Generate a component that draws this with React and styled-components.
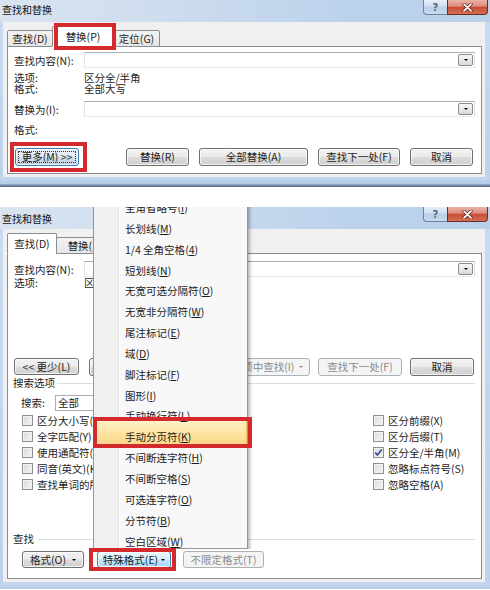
import React from 'react';
import styled, { createGlobalStyle, css } from 'styled-components';

const GlobalStyle = createGlobalStyle`
  html, body { margin: 0; padding: 0; background: #fff; }
  body {
    font-family: "Noto Sans CJK SC", "Noto Sans", sans-serif;
    font-size: 10.5px;
    color: #1c1c1c;
  }
  * { box-sizing: border-box; }
`;

const RED = '#d42a2e';

const redMark = css`
  position: relative;
  &::after {
    content: '';
    position: absolute;
    top: ${p => p.$mark.t}px;
    right: ${p => p.$mark.r}px;
    bottom: ${p => p.$mark.b}px;
    left: ${p => p.$mark.l}px;
    border: ${p => p.$mark.w || 4}px solid ${RED};
    pointer-events: none;
    z-index: 5;
  }
`;

const Page = styled.div`
  width: 490px;
  height: 590px;
  overflow: hidden;
  display: flex;
  flex-direction: column;
  background: #fff;
`;

const Window = styled.div`
  position: relative;
  display: flex;
  flex-direction: column;
  width: 490px;
  flex: none;
  overflow: hidden;
  margin-top: ${p => p.$gap || 0}px;
  background: linear-gradient(180deg, #c9dcf1 0%, #bcd2ec 100%);
`;

const TitleBar = styled.div`
  height: 22px;
  display: flex;
  justify-content: space-between;
  align-items: flex-start;
  padding-left: 2px;
  background: linear-gradient(90deg, #d9e4f0 0%, #cddcee 35%, #bcd2ec 70%, #b9d0eb 100%);
`;

const Title = styled.div`
  font-size: 10px;
  line-height: 14px;
  margin-top: ${p => p.$top}px;
  color: #111;
`;

const CaptionGroup = styled.div`
  display: flex;
  margin-right: 2px;
`;

const HelpBtn = styled.div`
  width: 24px;
  height: 15px;
  border: 1px solid #6c819e;
  border-top: none;
  border-right: none;
  border-radius: 0 0 0 4px;
  background: linear-gradient(180deg, #e6eef7 0%, #cfdeef 45%, #b9cde6 50%, #c9daee 100%);
  display: flex;
  align-items: center;
  justify-content: center;
  font-family: "DejaVu Sans", sans-serif;
  font-weight: bold;
  font-size: 10px;
  color: #56657a;
`;

const CloseBtn = styled.div`
  width: 41px;
  height: 15px;
  border: 1px solid #6e2c23;
  border-top: none;
  border-radius: 0 0 4px 0;
  background: linear-gradient(180deg, #ebb3a7 0%, #dc8c7b 45%, #c84a33 50%, #d66e55 100%);
  display: flex;
  align-items: center;
  justify-content: center;
`;

const Client = styled.div`
  margin: 0 5px 0 3px;
  background: #f0f0f0;
  padding: 4px 3px 3px 4px;
  display: flex;
  flex-direction: column;
`;

const BottomFrame = styled.div`
  height: ${p => p.$h}px;
  background: ${p => p.$dark
    ? 'linear-gradient(180deg, #c3d7ee 0%, #b4cbe6 65%, #7f96b3 80%, #4b6282 100%)'
    : 'linear-gradient(180deg, #c3d7ee 0%, #b6cde8 100%)'};
`;

const TabStrip = styled.div`
  display: flex;
  align-items: flex-end;
  height: 21px;
  position: relative;
  z-index: 1;
  margin-bottom: -1px;
`;

const Tab = styled.div`
  width: ${p => p.$w}px;
  height: ${p => (p.$active ? 21 : 17)}px;
  margin-left: -1px;
  &:first-child { margin-left: 0; }
  border: 1px solid #898c95;
  border-bottom: ${p => (p.$active ? '1px solid #fff' : '1px solid #898c95')};
  border-radius: 2px 2px 0 0;
  background: ${p => (p.$active ? '#fff' : 'linear-gradient(180deg, #f3f3f3 0%, #e6e6e6 100%)')};
  display: flex;
  align-items: center;
  justify-content: center;
  white-space: nowrap;
  line-height: 14px;
  padding-top: ${p => (p.$active ? 0 : 1)}px;
  ${p => p.$mark && redMark}
`;

const Panel = styled.div`
  background: #fff;
  border: 1px solid #898c95;
  display: flex;
  flex-direction: column;
  padding: 0 6px ${p => p.$pb}px 6px;
`;

const FieldRow = styled.div`
  display: flex;
  align-items: center;
  height: 16px;
  margin-top: ${p => p.$mt || 0}px;
`;

const Label = styled.div`
  width: 70px;
  flex: none;
  white-space: nowrap;
`;

const Combo = styled.div`
  flex: 1;
  height: 16px;
  border: 1px solid #abadb3;
  border-color: #abadb3 #dbdfe6 #e3e9ef #e2e3ea;
  background: #fff;
  display: flex;
  justify-content: flex-end;
  align-items: center;
  padding-right: 1px;
`;

const DropBtn = styled.div`
  width: 15px;
  height: 12px;
  border: 1px solid #8a8a8a;
  border-radius: 2px;
  background: linear-gradient(180deg, #f8f8f8 0%, #e9e9e9 50%, #d9d9d9 100%);
  display: flex;
  align-items: center;
  justify-content: center;
`;

const Tri = styled.span`
  display: inline-block;
  width: 0;
  height: 0;
  border-left: ${p => p.$s || 3}px solid transparent;
  border-right: ${p => p.$s || 3}px solid transparent;
  border-top: ${p => p.$s || 3}px solid ${p => p.$c || '#000'};
  margin-left: ${p => p.$ml || 0}px;
  vertical-align: middle;
`;

const InfoRow = styled.div`
  display: flex;
  line-height: 10.5px;
  height: 10.5px;
  margin-top: ${p => p.$mt || 0}px;
  white-space: nowrap;
`;

const ButtonRow = styled.div`
  display: flex;
  align-items: center;
  height: 18px;
  margin-top: ${p => p.$mt || 0}px;
  margin-right: ${p => p.$mr || 0}px;
`;

const BtnGroup = styled.div`
  display: flex;
  gap: ${p => p.$gap}px;
  margin-left: auto;
`;

const Btn = styled.div`
  position: relative;
  width: ${p => p.$w}px;
  height: ${p => p.$h || 18}px;
  margin-left: ${p => p.$ml || 0}px;
  flex: none;
  border: 1px solid #707070;
  border-radius: 3px;
  background: linear-gradient(180deg, #f2f2f2 0%, #ebebeb 48%, #dddddd 52%, #cfcfcf 100%);
  box-shadow: inset 0 0 0 1px rgba(255, 255, 255, 0.7);
  display: flex;
  align-items: center;
  justify-content: center;
  gap: 3px;
  white-space: nowrap;
  line-height: 14px;
  color: #1c1c1c;
  ${p => p.$focus && css`
    border-color: #3c7fb1;
    background: linear-gradient(180deg, #eef3f8 0%, #e1eaf3 48%, #d0dde9 52%, #c4d3e2 100%);
    &::before {
      content: '';
      position: absolute;
      inset: 2px;
      border: 1px dotted #333;
    }
  `}
  ${p => p.$hot && css`
    border-color: #3c7fb1;
    background: linear-gradient(180deg, #eaf6fd 0%, #d9f0fc 48%, #bee6fd 52%, #a7d9f5 100%);
  `}
  ${p => p.$disabled && css`
    border-color: #adb2b5;
    background: #f4f4f4;
    box-shadow: none;
    color: #8a8a8a;
  `}
  ${p => p.$mark && redMark}
`;

const GroupHeader = styled.div`
  display: flex;
  align-items: center;
  gap: ${p => p.$gap || 2}px;
  height: 12px;
  line-height: 12px;
  margin-top: ${p => p.$mt || 0}px;
  margin-left: -1px;
  white-space: nowrap;
`;

const HLine = styled.div`
  flex: 1;
  height: 1px;
  background: #d5dfe5;
  margin-top: 2px;
`;

const SearchRow = styled.div`
  display: flex;
  align-items: center;
  height: 16px;
  margin-top: ${p => p.$mt || 0}px;
  margin-left: 7px;
`;

const SearchLabel = styled.div`
  width: 34px;
`;

const Select = styled.div`
  width: 95px;
  height: 16px;
  border: 1px solid #abadb3;
  background: #fff;
  padding-left: 2px;
  line-height: 14px;
`;

const CheckGrid = styled.div`
  display: grid;
  grid-template-columns: 351px 1fr;
  grid-auto-flow: column;
  grid-template-rows: repeat(5, 16px);
  margin-top: ${p => p.$mt || 0}px;
  margin-left: 8px;
`;

const CheckItem = styled.div`
  display: flex;
  align-items: center;
  gap: 4px;
  white-space: nowrap;
`;

const Box = styled.span`
  width: 11px;
  height: 11px;
  flex: none;
  border: 1px solid #8f8f8f;
  background: linear-gradient(135deg, #d9d9d9 0%, #f7f7f7 100%);
  box-shadow: inset 0 0 0 1px #f2f2f2;
  display: inline-flex;
  align-items: center;
  justify-content: center;
`;

const Menu = styled.div`
  position: absolute;
  left: 93px;
  top: -10px;
  width: 155px;
  height: 352px;
  z-index: 4;
  border: 1px solid #979797;
  background: linear-gradient(90deg, #f0f0f0 0, #f0f0f0 24px, #e2e3e3 24px, #e2e3e3 25px, #ffffff 25px, #ffffff 26px, #f8f8f8 26px);
  box-shadow: 2px 2px 3px rgba(0, 0, 0, 0.28);
  clip-path: inset(-20px -12px 0 -12px);
`;

const MenuItem = styled.div`
  height: 20.85px;
  line-height: 20.85px;
  padding-left: 31px;
  white-space: nowrap;
  color: #1b1b1b;
  font-size: 10.5px;
  ${p => p.$hl && css`
    position: relative;
    &::before {
      content: '';
      position: absolute;
      top: -7px;
      bottom: 3px;
      left: 1px;
      right: 0;
      background: linear-gradient(180deg, #fff2c8 0%, #fde39f 55%, #fbd78a 100%);
      border: 1px solid #f1c869;
    }
  `}
  ${p => p.$mark && redMark}
`;

const ItemText = styled.span`
  position: relative;
  z-index: 1;
  u { text-decoration: underline; text-underline-offset: 1px; }
`;

const CloseGlyph = () => (
  <svg width="11" height="9" viewBox="0 0 11 9">
    <path d="M2 1.2 L9 7.8 M9 1.2 L2 7.8" stroke="#5a1d14" strokeWidth="3.2" strokeLinecap="round" />
    <path d="M2 1.2 L9 7.8 M9 1.2 L2 7.8" stroke="#fff" strokeWidth="1.8" strokeLinecap="round" />
  </svg>
);

const Caption = () => (
  <CaptionGroup>
    <HelpBtn>?</HelpBtn>
    <CloseBtn><CloseGlyph /></CloseBtn>
  </CaptionGroup>
);

const Check = () => (
  <svg width="9" height="9" viewBox="0 0 9 9">
    <path d="M1.2 4.6 L3.4 7 L7.8 1.6" stroke="#2e4f8c" strokeWidth="1.6" fill="none" />
  </svg>
);

const ComboField = () => (
  <Combo>
    <DropBtn><Tri $s={2.5} /></DropBtn>
  </Combo>
);

const menuItems = [
  ['全角省略号', 'I'],
  ['长划线', 'M'],
  ['1/4 全角空格', '4'],
  ['短划线', 'N'],
  ['无宽可选分隔符', 'O'],
  ['无宽非分隔符', 'W'],
  ['尾注标记', 'E'],
  ['域', 'D'],
  ['脚注标记', 'F'],
  ['图形', 'I'],
  ['手动换行符', 'L'],
  ['手动分页符', 'K'],
  ['不间断连字符', 'H'],
  ['不间断空格', 'S'],
  ['可选连字符', 'O'],
  ['分节符', 'B'],
  ['空白区域', 'W'],
];

const leftChecks = ['区分大小写(H)', '全字匹配(Y)', '使用通配符(U)', '同音(英文)(K)', '查找单词的所有形式(英文)(W)'];
const rightChecks = [
  ['区分前缀(X)', false],
  ['区分后缀(T)', false],
  ['区分全/半角(M)', true],
  ['忽略标点符号(S)', false],
  ['忽略空格(A)', false],
];

export default function App() {
  return (
    <Page>
      <GlobalStyle />

      <Window>
        <TitleBar>
          <Title $top={3}>查找和替换</Title>
          <Caption />
        </TitleBar>
        <Client>
          <TabStrip>
            <Tab $w={46}>查找(D)</Tab>
            <Tab $w={62} $active $mark={{ t: -4, r: -3, b: -4, l: 1 }}>替换(P)</Tab>
            <Tab $w={47}>定位(G)</Tab>
          </TabStrip>
          <Panel $pb={7}>
            <FieldRow $mt={5}>
              <Label>查找内容(N):</Label>
              <ComboField />
            </FieldRow>
            <InfoRow $mt={5}><Label>选项:</Label><span>区分全/半角</span></InfoRow>
            <InfoRow><Label>格式:</Label><span>全部大写</span></InfoRow>
            <FieldRow $mt={7}>
              <Label>替换为(I):</Label>
              <ComboField />
            </FieldRow>
            <InfoRow $mt={8}><Label>格式:</Label></InfoRow>
            <ButtonRow $mt={12.5} $mr={2}>
              <Btn $w={64} $ml={1} $focus $mark={{ t: -7, r: -9, b: -7, l: -6 }}>更多(M) &gt;&gt;</Btn>
              <BtnGroup $gap={10}>
                <Btn $w={63}>替换(R)</Btn>
                <Btn $w={109}>全部替换(A)</Btn>
                <Btn $w={82}>查找下一处(F)</Btn>
                <Btn $w={63}>取消</Btn>
              </BtnGroup>
            </ButtonRow>
          </Panel>
        </Client>
        <BottomFrame $h={10} $dark />
      </Window>

      <Window $gap={20}>
        <TitleBar>
          <Title $top={5}>查找和替换</Title>
          <Caption />
        </TitleBar>
        <Client>
          <TabStrip>
            <Tab $w={50} $active>查找(D)</Tab>
            <Tab $w={58}>替换(P)</Tab>
            <Tab $w={47}>定位(G)</Tab>
          </TabStrip>
          <Panel $pb={9}>
            <FieldRow $mt={7}>
              <Label>查找内容(N):</Label>
              <ComboField />
            </FieldRow>
            <InfoRow $mt={1}><Label>选项:</Label><span>区分全/半角</span></InfoRow>
            <ButtonRow $mt={69} $mr={1}>
              <Btn $w={65} $h={17}>&lt;&lt; 更少(L)</Btn>
              <BtnGroup $gap={8}>
                <Btn $w={107}>阅读突出显示(R)<Tri $s={2.5} $ml={2} /></Btn>
                <Btn $w={106} $disabled>在以下项中查找(I)<Tri $s={2.5} $c="#8a8a8a" $ml={2} /></Btn>
                <Btn $w={84} $disabled>查找下一处(F)</Btn>
                <Btn $w={64}>取消</Btn>
              </BtnGroup>
            </ButtonRow>
            <GroupHeader $mt={1} $gap={0}>搜索选项<HLine /></GroupHeader>
            <SearchRow $mt={6}>
              <SearchLabel>搜索:</SearchLabel>
              <Select>全部</Select>
            </SearchRow>
            <CheckGrid $mt={2}>
              {leftChecks.map(t => (
                <CheckItem key={t}><Box />{t}</CheckItem>
              ))}
              {rightChecks.map(([t, on]) => (
                <CheckItem key={t}><Box>{on && <Check />}</Box>{t}</CheckItem>
              ))}
            </CheckGrid>
            <GroupHeader $mt={40} $gap={4}>查找<HLine /></GroupHeader>
            <ButtonRow $mt={6}>
              <Btn $w={62} $h={17} $ml={8}>格式(O)<Tri $s={2.5} $ml={3} /></Btn>
              <Btn $w={74} $h={17} $ml={13} $hot $mark={{ t: -4, r: -6, b: -4, l: -9 }}>特殊格式(E)<Tri $s={2.5} /></Btn>
              <Btn $w={81} $h={17} $ml={12} $disabled>不限定格式(T)</Btn>
            </ButtonRow>
          </Panel>
        </Client>
        <BottomFrame $h={7} />

        <Menu>
          {menuItems.map(([t, k], i) => (
            <MenuItem
              key={i}
              $hl={i === 11}
              $mark={i === 11 ? { t: -10, r: -5, b: 0, l: -1 } : undefined}
            >
              <ItemText>{t}(<u>{k}</u>)</ItemText>
            </MenuItem>
          ))}
        </Menu>
      </Window>
    </Page>
  );
}
